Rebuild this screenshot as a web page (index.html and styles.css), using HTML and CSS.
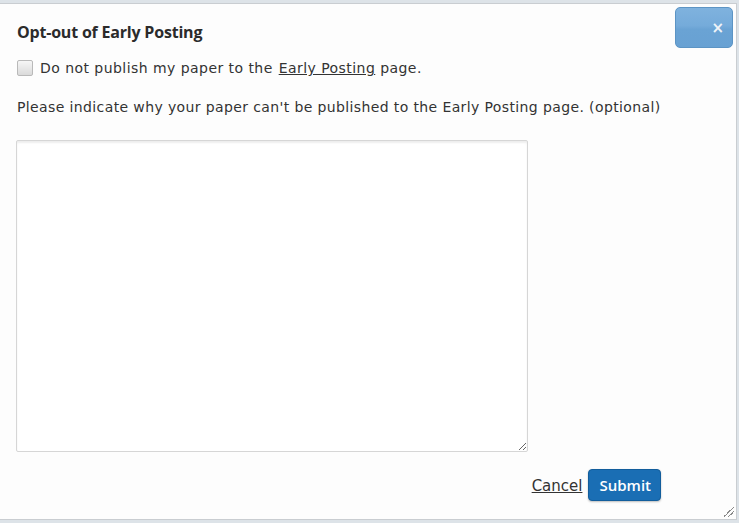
FILE: index.html
```html
<!DOCTYPE html>
<html>
<head>
<meta charset="utf-8">
<link rel="stylesheet" href="styles.css">
</head>
<body>
<div class="dialog">
  <div class="header">
    <h1 class="title">Opt-out of Early Posting</h1>
    <button class="close" type="button"><span>×</span></button>
  </div>
  <div class="content">
    <label class="check-row"><span class="checkbox"></span>Do not publish my paper to the <a href="#">Early Posting</a> page.</label>
    <p class="prompt">Please indicate why your paper can't be published to the Early Posting page. (optional)</p>
    <textarea class="reason"></textarea>
  </div>
  <div class="footer">
    <a href="#" class="cancel">Cancel</a>
    <button class="submit" type="button">Submit</button>
  </div>
  <span class="grip"></span>
</div>
</body>
</html>
```
FILE: styles.css
```css
html, body { margin: 0; padding: 0; }
body {
  background: #dde3e8;
  width: 739px;
  height: 523px;
  overflow: hidden;
  font-family: "DejaVu Sans", Verdana, sans-serif;
  color: #333;
}
.dialog {
  position: relative;
  box-sizing: border-box;
  margin-top: 3px;
  width: 737px;
  height: 517px;
  background: #fdfdfd;
  border: 1px solid #c9cdd1;
  border-left: none;
  display: flex;
  flex-direction: column;
}
.header {
  display: flex;
  justify-content: space-between;
  align-items: flex-start;
  padding: 3px 3px 0 17px;
}
.title {
  margin: 14px 0 0;
  font-family: "Open Sans", sans-serif;
  font-size: 16px;
  font-weight: 700;
  color: #2b2b2b;
  letter-spacing: -0.2px;
}
.close {
  width: 58px;
  height: 41px;
  border: 1px solid #5c94c4;
  border-radius: 5px;
  background: linear-gradient(#7fb2de 0%, #75abda 45%, #6aa3d4 55%, #68a1d3 100%);
  color: #f0f4f8;
  padding: 0 8px 0 0;
  text-align: right;
  font-family: "DejaVu Sans", sans-serif;
  font-size: 15px;
  font-weight: 700;
  line-height: 38px;
}
.content {
  padding: 0 0 0 17px;
}
.check-row {
  display: block;
  margin-top: 10px;
  font-size: 14px;
  line-height: 20px;
  letter-spacing: 0.45px;
  color: #333;
}
.checkbox {
  display: inline-block;
  vertical-align: -3px;
  box-sizing: border-box;
  width: 16px;
  height: 16px;
  border: 1px solid #b9b9b9;
  border-radius: 2px;
  background: linear-gradient(#f6f6f6, #dadada);
  margin-right: 7px;
}
.check-row a { color: #333; text-decoration: underline; margin-left: 1px; }
.prompt {
  margin: 21px 0 0;
  font-size: 14px;
  line-height: 17px;
  letter-spacing: 0.38px;
  color: #333;
}
.reason {
  display: block;
  box-sizing: border-box;
  margin: 24px 0 0 -1px;
  width: 512px;
  height: 312px;
  border: 1px solid #d6d6d6;
  border-radius: 2px;
  background: #fff;
  box-shadow: inset 0 2px 2px rgba(0,0,0,0.07);
  resize: both;
}
.footer {
  display: flex;
  justify-content: flex-end;
  align-items: center;
  gap: 6px;
  padding: 17px 75px 0 0;
}
.cancel {
  font-size: 15px;
  color: #333;
  text-decoration: underline;
  margin-top: 2px;
}
.submit {
  height: 32px;
  padding: 0 9px 0 10px;
  border: 1px solid #125d9c;
  border-radius: 4px;
  background: #1a6eb4;
  color: #fff;
  font-family: "Open Sans", sans-serif;
  font-size: 15px;
  font-weight: 600;
  box-shadow: 0 1px 2px rgba(0,0,0,0.25);
}
.grip {
  position: absolute;
  right: 2px;
  bottom: 2px;
  width: 10px;
  height: 10px;
  background: linear-gradient(135deg, transparent 45%, #8a8a8a 45%, #8a8a8a 52%, transparent 52%, transparent 68%, #8a8a8a 68%, #8a8a8a 75%, transparent 75%);
}
```
